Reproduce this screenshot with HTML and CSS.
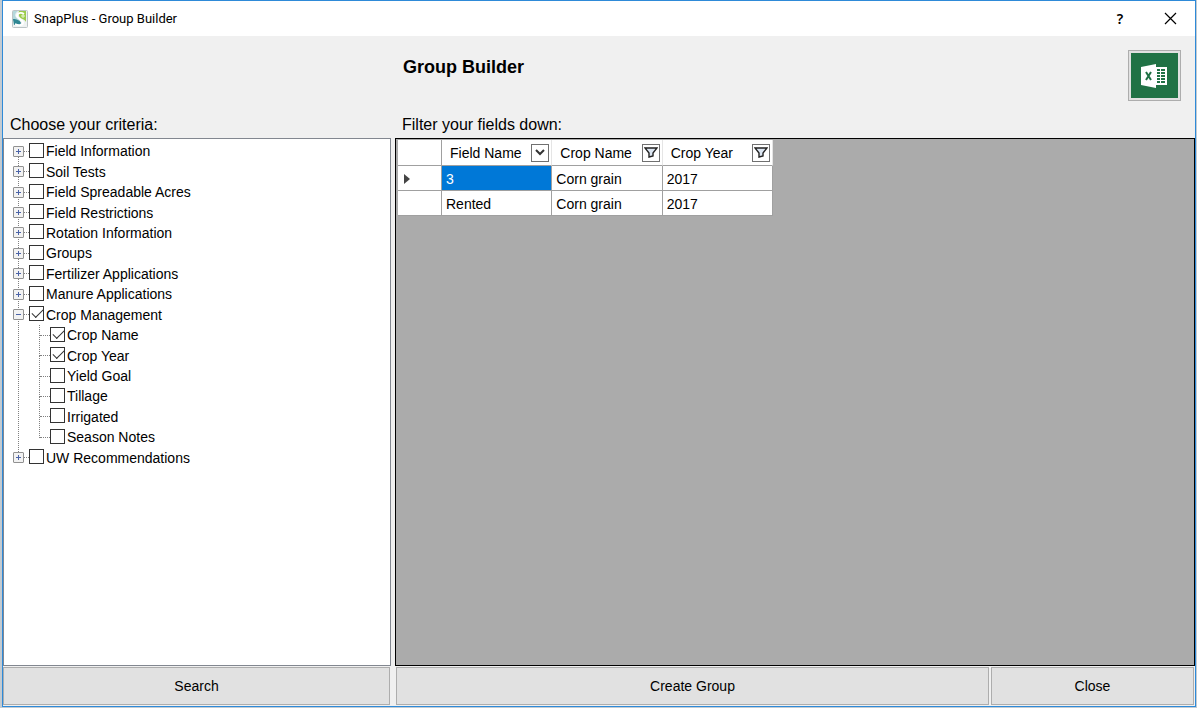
FILE: index.html
```
<!DOCTYPE html>
<html lang="en">
<head>
<meta charset="utf-8">
<title>SnapPlus - Group Builder</title>
<link rel="stylesheet" href="styles.css">
</head>
<body>
<div class="window">
  <header class="titlebar">
    <svg class="app-icon" width="16" height="18" viewBox="0 0 16 18" aria-hidden="true">
      <rect x="0.5" y="0.5" width="15" height="17" rx="1" fill="#eef2f2" stroke="#bcc4c6"/>
      <path d="M1 1h5c-3 2-4 5-1 7 2 1 3 2 3 3H1z" fill="#b5d8dc"/>
      <path d="M1 9c3 0 7 1 8 4l-1 2H2z" fill="#2f8793"/>
      <path d="M7 1h7v11c-1-3-6-3-7-6 0-2-1-3 0-5z" fill="#9bcb4c"/>
      <path d="M12 4C9 2 5 3 5 6s7 4 6 7c0 2-4 3-8 1" fill="none" stroke="#fff" stroke-width="1.8"/>
      <path d="M11 4v4M9 6h4" stroke="#e6f3cf"/>
    </svg>
    <span class="caption">SnapPlus - Group Builder</span>
    <button class="caption-button" type="button" aria-label="Help">?</button>
    <button class="caption-button" type="button" aria-label="Close window">
      <svg width="13" height="13" viewBox="0 0 13 13"><path d="M1 1l11 11M12 1L1 12" stroke="#000" stroke-width="1.2"/></svg>
    </button>
  </header>

  <main class="content">
    <div class="top">
      <h1 class="heading">Group Builder</h1>
      <button class="export" type="button" aria-label="Export to Excel">
        <svg width="27" height="24" viewBox="0 0 27 24">
          <path d="M14 3h12v18H14z" fill="#fff"/>
          <path d="M16 5h3v2h-3zM20 5h4v2h-4zM16 8h3v2h-3zM20 8h4v2h-4zM16 11h3v2h-3zM20 11h4v2h-4zM16 14h3v2h-3zM20 14h4v2h-4zM16 17h3v2h-3zM20 17h4v2h-4z" fill="#207245"/>
          <path d="M0 3l15-3v24L0 21z" fill="#fff"/>
          <path d="M5 8l5 8M10 8l-5 8" stroke="#207245" stroke-width="2"/>
        </svg>
      </button>
    </div>

    <h2 class="label" id="criteria">Choose your criteria:</h2>
    <h2 class="label" id="filter">Filter your fields down:</h2>

    <section class="criteria" aria-labelledby="criteria">
      <ul class="tree">
        <li class="node"><button class="toggle" type="button" aria-label="Expand Field Information"></button><label class="item"><input class="check" type="checkbox">Field Information</label></li>
        <li class="node"><button class="toggle" type="button" aria-label="Expand Soil Tests"></button><label class="item"><input class="check" type="checkbox">Soil Tests</label></li>
        <li class="node"><button class="toggle" type="button" aria-label="Expand Field Spreadable Acres"></button><label class="item"><input class="check" type="checkbox">Field Spreadable Acres</label></li>
        <li class="node"><button class="toggle" type="button" aria-label="Expand Field Restrictions"></button><label class="item"><input class="check" type="checkbox">Field Restrictions</label></li>
        <li class="node"><button class="toggle" type="button" aria-label="Expand Rotation Information"></button><label class="item"><input class="check" type="checkbox">Rotation Information</label></li>
        <li class="node"><button class="toggle" type="button" aria-label="Expand Groups"></button><label class="item"><input class="check" type="checkbox">Groups</label></li>
        <li class="node"><button class="toggle" type="button" aria-label="Expand Fertilizer Applications"></button><label class="item"><input class="check" type="checkbox">Fertilizer Applications</label></li>
        <li class="node"><button class="toggle" type="button" aria-label="Expand Manure Applications"></button><label class="item"><input class="check" type="checkbox">Manure Applications</label></li>
        <li class="node"><button class="toggle open" type="button" aria-label="Collapse Crop Management"></button><label class="item"><input class="check" type="checkbox" checked>Crop Management</label></li>
        <li class="node child first"><label class="item"><input class="check" type="checkbox" checked>Crop Name</label></li>
        <li class="node child"><label class="item"><input class="check" type="checkbox" checked>Crop Year</label></li>
        <li class="node child"><label class="item"><input class="check" type="checkbox">Yield Goal</label></li>
        <li class="node child"><label class="item"><input class="check" type="checkbox">Tillage</label></li>
        <li class="node child"><label class="item"><input class="check" type="checkbox">Irrigated</label></li>
        <li class="node child"><label class="item"><input class="check" type="checkbox">Season Notes</label></li>
        <li class="node"><button class="toggle" type="button" aria-label="Expand UW Recommendations"></button><label class="item"><input class="check" type="checkbox">UW Recommendations</label></li>
      </ul>
    </section>

    <section class="fields" aria-labelledby="filter">
      <table class="grid">
        <colgroup><col class="col-marker"><col class="col"><col class="col"><col class="col"></colgroup>
        <thead>
          <tr>
            <td></td>
            <th scope="col"><div class="head">Field Name<button class="filter" type="button" aria-label="Filter Field Name"><svg width="10" height="7" viewBox="0 0 10 7"><path d="M1 1l4 4 4-4" fill="none" stroke="#333" stroke-width="2"/></svg></button></div></th>
            <th scope="col"><div class="head">Crop Name<button class="filter" type="button" aria-label="Filter Crop Name"><svg width="14" height="11" viewBox="0 0 14 11"><path d="M1 1h12L9 6v3l-4 1V6z" fill="#dce6f2" stroke="#222" stroke-width="1.4"/></svg></button></div></th>
            <th scope="col"><div class="head">Crop Year<button class="filter" type="button" aria-label="Filter Crop Year"><svg width="14" height="11" viewBox="0 0 14 11"><path d="M1 1h12L9 6v3l-4 1V6z" fill="#dce6f2" stroke="#222" stroke-width="1.4"/></svg></button></div></th>
          </tr>
        </thead>
        <tbody>
          <tr>
            <td class="marker"><svg width="6" height="10" viewBox="0 0 6 10"><path d="M0 0l6 5-6 5z" fill="#444"/></svg></td>
            <td class="selected">3</td><td>Corn grain</td><td>2017</td>
          </tr>
          <tr><td></td><td>Rented</td><td>Corn grain</td><td>2017</td></tr>
        </tbody>
      </table>
    </section>

    <button class="action" type="button">Search</button>
    <div class="actions">
      <button class="action create" type="button">Create Group</button>
      <button class="action close" type="button">Close</button>
    </div>
  </main>
</div>
</body>
</html>
```
FILE: styles.css
```
* { box-sizing: border-box; }
body {
  margin: 0;
  min-height: 100vh;
  display: flex;
  padding: 0 1px 1px 2px;
  background: #c3cbd2;
  color: #000;
  font: 14px/20px "Liberation Sans", Arial, sans-serif;
}
button { font: inherit; color: inherit; border-radius: 0; padding: 0; }
svg { display: block; }
.window {
  flex: 1;
  display: flex;
  flex-direction: column;
  border: 1px solid #2e8ad8;
  background: #f0f0f0;
}
.titlebar {
  display: flex;
  align-items: center;
  height: 35px;
  padding-left: 9px;
  background: #fff;
}
.caption {
  flex: 1;
  padding-left: 6px;
  font: 13px/18px Roboto, sans-serif;
}
.caption-button {
  display: grid;
  place-items: center;
  width: 50px;
  height: 34px;
  border: 0;
  background: none;
  font: 600 14px/18px "Noto Sans", sans-serif;
}
.content {
  flex: 1;
  display: grid;
  grid-template-columns: 388px minmax(0, 1fr);
  grid-template-rows: auto auto 1fr 38px;
  column-gap: 4px;
  padding-bottom: 1px;
}
.top {
  grid-column: 2;
  display: flex;
  justify-content: space-between;
  align-items: flex-start;
  padding: 14px 14px 0 8px;
}
.heading { margin: 6px 0 0; font-size: 18px; line-height: 22px; font-weight: bold; }
.export {
  display: grid;
  place-items: center;
  width: 53px;
  height: 51px;
  border: 1px solid #adadad;
  background: #207245;
  box-shadow: inset 0 0 0 2px #e1e1e1;
}
.label {
  margin: 0;
  padding: 14px 7px 3px;
  font-size: 16px;
  line-height: 20px;
  font-weight: normal;
}
.criteria { border: 1px solid #828790; background: #fff; margin-bottom: 1px; }
.tree {
  position: relative;
  display: grid;
  grid-template-rows: repeat(16, 1fr);
  height: 327px;
  margin: 2px 0 0;
  padding: 0 0 0 9px;
  list-style: none;
}
.tree::before {
  content: "";
  position: absolute;
  left: 14px;
  top: 12px;
  bottom: 12px;
  border-left: 1px dotted #808080;
}
.node { position: relative; display: flex; align-items: center; }
.node::before { content: ""; order: 1; width: 5px; border-top: 1px dotted #808080; }
.toggle {
  position: relative;
  width: 11px;
  height: 11px;
  border: 1px solid #919191;
  border-radius: 1px;
  background:
    linear-gradient(#4b63a7, #4b63a7) center / 5px 1px no-repeat,
    linear-gradient(#4b63a7, #4b63a7) center / 1px 5px no-repeat,
    #f2f2f2;
}
.toggle.open { background: linear-gradient(#4b63a7, #4b63a7) center / 5px 1px no-repeat, #f2f2f2; }
.item { order: 2; display: flex; align-items: center; gap: 2px; white-space: nowrap; }
.check {
  appearance: none;
  width: 15px;
  height: 15px;
  margin: 0 0 2px;
  border: 1px solid #333;
  background: #fff;
}
.check:checked::after {
  content: "";
  display: block;
  width: 10px;
  height: 5px;
  margin: 2px 0 0 2px;
  border: solid #333;
  border-width: 0 0 1px 1px;
  transform: rotate(-45deg);
}
.child { padding-left: 27px; }
.child::before { width: 10px; }
.child::after {
  content: "";
  position: absolute;
  left: 26px;
  top: -10px;
  height: 21px;
  border-left: 1px dotted #808080;
}
.child.first::after { top: 0; height: 11px; }
.fields { padding: 1px 1px 1px 2px; border: 1px solid #000; background: #ababab; margin-bottom: 1px; }
.grid { table-layout: fixed; width: 375px; border-collapse: separate; border-spacing: 0; background: #fff; }
.col-marker { width: 44px; }
.grid th, .grid td {
  height: 25px;
  padding: 1px 0 0 4px;
  border: solid #a0a0a0;
  border-width: 0 1px 1px 0;
  font-size: 14px;
  line-height: 20px;
  font-weight: normal;
  text-align: left;
}
.grid th, .grid thead td { height: 26px; padding-top: 0; }
.grid th { border-right-color: #e5e5e5; }
.grid .marker { padding-left: 6px; }
.grid .selected { background: #0078d7; color: #fff; }
.head { display: flex; align-items: center; justify-content: space-between; padding: 0 2px 0 4px; }
.filter {
  display: grid;
  place-items: center;
  width: 18px;
  height: 18px;
  border: 1px solid #707070;
  background: #fff;
}
.action {
  height: 38px;
  border: 1px solid #adadad;
  background: #e1e1e1;
}
.content > .action { margin: 0 1px 0 0; }
.actions { display: flex; gap: 2px; padding: 0 1px; }
.create { flex: 594; }
.close { flex: 202; }
```
